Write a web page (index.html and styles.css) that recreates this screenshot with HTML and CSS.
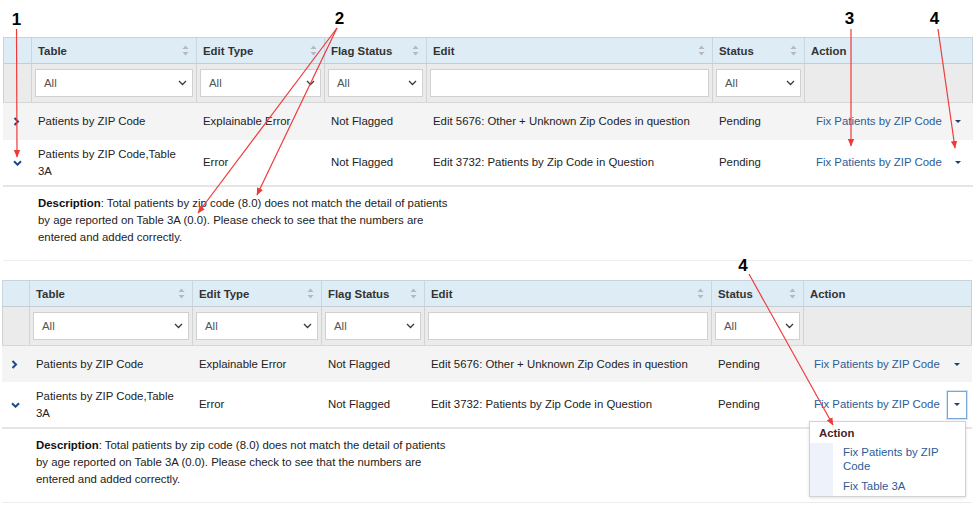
FILE: index.html
```html
<!DOCTYPE html>
<html>
<head>
<meta charset="utf-8">
<title>Edits</title>
<link rel="stylesheet" href="styles.css">
</head>
<body>
<div class="page">
  <section class="grid t1">
    <div class="row head">
      <div class="hc"></div>
      <div class="hc"><span>Table</span><svg class="sort" viewBox="0 0 7 11"><path d="M3.5 0.5L6.5 4H0.5Z M3.5 10.5L0.5 7H6.5Z"/></svg></div>
      <div class="hc"><span>Edit Type</span><svg class="sort" viewBox="0 0 7 11"><path d="M3.5 0.5L6.5 4H0.5Z M3.5 10.5L0.5 7H6.5Z"/></svg></div>
      <div class="hc"><span>Flag Status</span><svg class="sort" viewBox="0 0 7 11"><path d="M3.5 0.5L6.5 4H0.5Z M3.5 10.5L0.5 7H6.5Z"/></svg></div>
      <div class="hc"><span>Edit</span><svg class="sort" viewBox="0 0 7 11"><path d="M3.5 0.5L6.5 4H0.5Z M3.5 10.5L0.5 7H6.5Z"/></svg></div>
      <div class="hc"><span>Status</span><svg class="sort" viewBox="0 0 7 11"><path d="M3.5 0.5L6.5 4H0.5Z M3.5 10.5L0.5 7H6.5Z"/></svg></div>
      <div class="hc"><span>Action</span></div>
    </div>
    <div class="row filt">
      <div class="fc"></div>
      <div class="fc"><div class="sel"><span>All</span><svg class="chev" viewBox="0 0 9 6"><path d="M1 1l3.5 3.5L8 1"/></svg></div></div>
      <div class="fc"><div class="sel"><span>All</span><svg class="chev" viewBox="0 0 9 6"><path d="M1 1l3.5 3.5L8 1"/></svg></div></div>
      <div class="fc"><div class="sel"><span>All</span><svg class="chev" viewBox="0 0 9 6"><path d="M1 1l3.5 3.5L8 1"/></svg></div></div>
      <div class="fc"><div class="inp"></div></div>
      <div class="fc"><div class="sel"><span>All</span><svg class="chev" viewBox="0 0 9 6"><path d="M1 1l3.5 3.5L8 1"/></svg></div></div>
      <div class="fc"></div>
    </div>
    <div class="row data odd">
      <div class="dc exp"><svg class="xr" viewBox="0 0 7 9"><path d="M1.5 1l3.5 3.5L1.5 8"/></svg></div>
      <div class="dc">Patients by ZIP Code</div>
      <div class="dc">Explainable Error</div>
      <div class="dc">Not Flagged</div>
      <div class="dc">Edit 5676: Other + Unknown Zip Codes in question</div>
      <div class="dc">Pending</div>
      <div class="dc act"><a href="#">Fix Patients by ZIP Code</a><span class="cbtn"><i></i></span></div>
    </div>
    <div class="row data open">
      <div class="dc exp"><svg class="xd" viewBox="0 0 9 6"><path d="M1 1.2l3.5 3.5L8 1.2"/></svg></div>
      <div class="dc">Patients by ZIP Code,Table 3A</div>
      <div class="dc">Error</div>
      <div class="dc">Not Flagged</div>
      <div class="dc">Edit 3732: Patients by Zip Code in Question</div>
      <div class="dc">Pending</div>
      <div class="dc act"><a href="#">Fix Patients by ZIP Code</a><span class="cbtn"><i></i></span></div>
    </div>
    <div class="desc"><p><b>Description</b>: Total patients by zip code (8.0) does not match the detail of patients by age reported on Table 3A (0.0). Please check to see that the numbers are entered and added correctly.</p></div>
  </section>

  <section class="grid t2">
    <div class="row head">
      <div class="hc"></div>
      <div class="hc"><span>Table</span><svg class="sort" viewBox="0 0 7 11"><path d="M3.5 0.5L6.5 4H0.5Z M3.5 10.5L0.5 7H6.5Z"/></svg></div>
      <div class="hc"><span>Edit Type</span><svg class="sort" viewBox="0 0 7 11"><path d="M3.5 0.5L6.5 4H0.5Z M3.5 10.5L0.5 7H6.5Z"/></svg></div>
      <div class="hc"><span>Flag Status</span><svg class="sort" viewBox="0 0 7 11"><path d="M3.5 0.5L6.5 4H0.5Z M3.5 10.5L0.5 7H6.5Z"/></svg></div>
      <div class="hc"><span>Edit</span><svg class="sort" viewBox="0 0 7 11"><path d="M3.5 0.5L6.5 4H0.5Z M3.5 10.5L0.5 7H6.5Z"/></svg></div>
      <div class="hc"><span>Status</span><svg class="sort" viewBox="0 0 7 11"><path d="M3.5 0.5L6.5 4H0.5Z M3.5 10.5L0.5 7H6.5Z"/></svg></div>
      <div class="hc"><span>Action</span></div>
    </div>
    <div class="row filt">
      <div class="fc"></div>
      <div class="fc"><div class="sel"><span>All</span><svg class="chev" viewBox="0 0 9 6"><path d="M1 1l3.5 3.5L8 1"/></svg></div></div>
      <div class="fc"><div class="sel"><span>All</span><svg class="chev" viewBox="0 0 9 6"><path d="M1 1l3.5 3.5L8 1"/></svg></div></div>
      <div class="fc"><div class="sel"><span>All</span><svg class="chev" viewBox="0 0 9 6"><path d="M1 1l3.5 3.5L8 1"/></svg></div></div>
      <div class="fc"><div class="inp"></div></div>
      <div class="fc"><div class="sel"><span>All</span><svg class="chev" viewBox="0 0 9 6"><path d="M1 1l3.5 3.5L8 1"/></svg></div></div>
      <div class="fc"></div>
    </div>
    <div class="row data odd">
      <div class="dc exp"><svg class="xr" viewBox="0 0 7 9"><path d="M1.5 1l3.5 3.5L1.5 8"/></svg></div>
      <div class="dc">Patients by ZIP Code</div>
      <div class="dc">Explainable Error</div>
      <div class="dc">Not Flagged</div>
      <div class="dc">Edit 5676: Other + Unknown Zip Codes in question</div>
      <div class="dc">Pending</div>
      <div class="dc act"><a href="#">Fix Patients by ZIP Code</a><span class="cbtn"><i></i></span></div>
    </div>
    <div class="row data open">
      <div class="dc exp"><svg class="xd" viewBox="0 0 9 6"><path d="M1 1.2l3.5 3.5L8 1.2"/></svg></div>
      <div class="dc">Patients by ZIP Code,Table 3A</div>
      <div class="dc">Error</div>
      <div class="dc">Not Flagged</div>
      <div class="dc">Edit 3732: Patients by Zip Code in Question</div>
      <div class="dc">Pending</div>
      <div class="dc act"><a href="#">Fix Patients by ZIP Code</a><span class="cbtn focus"><i></i></span>
        <div class="menu">
          <h4>Action</h4>
          <ul>
            <li>Fix Patients by ZIP Code</li>
            <li>Fix Table 3A</li>
          </ul>
        </div>
      </div>
    </div>
    <div class="desc"><p><b>Description</b>: Total patients by zip code (8.0) does not match the detail of patients by age reported on Table 3A (0.0). Please check to see that the numbers are entered and added correctly.</p></div>
  </section>

  <svg class="notes" viewBox="0 0 975 517">
    <defs>
      <marker id="ah" markerWidth="8" markerHeight="8" refX="7" refY="4" orient="auto" markerUnits="userSpaceOnUse">
        <path d="M0 0.8L7.5 4L0 7.2Z" fill="#ee3a3a"/>
      </marker>
    </defs>
    <g class="ln">
      <line x1="16.5" y1="29" x2="17" y2="157"/>
      <line x1="337" y1="28" x2="198" y2="213"/>
      <line x1="337" y1="28" x2="257" y2="195"/>
      <line x1="851" y1="29" x2="851" y2="146"/>
      <line x1="938" y1="29" x2="955" y2="148"/>
      <line x1="749" y1="274" x2="833" y2="425"/>
    </g>
    <g class="num">
      <text x="16.5" y="24.5">1</text>
      <text x="339.5" y="24">2</text>
      <text x="849.5" y="24">3</text>
      <text x="934.5" y="24">4</text>
      <text x="743" y="271">4</text>
    </g>
  </svg>
</div>
</body>
</html>
```

FILE: styles.css
```css
* { box-sizing: border-box; margin: 0; padding: 0; }
html, body { width: 975px; height: 517px; overflow: hidden; background: #fff; }
body {
  font-family: "Liberation Sans", Arial, sans-serif;
  font-size: 11.4px;
  color: #222;
}
.page { position: relative; width: 975px; height: 517px; padding-top: 37px; }

.grid {
  --c: 29px 165px 128px 102px 286px 92px 168px;
  --first: 29px;
  width: 970px;
  margin-left: 3px;
}
.t2 {
  --c: 28px 163px 129px 103px 287px 92px 168px;
  --first: 28px;
  margin-left: 2px;
  margin-top: 19px;
}
.row { display: grid; grid-template-columns: var(--c); }

/* header */
.head {
  height: 27px;
  background: #deecf5;
  border-top: 1px solid #c6d5dd;
  border-bottom: 1px solid #c3ced3;
  box-shadow: inset 1px 0 #c6d5dd, inset -1px 0 #c6d5dd;
}
.hc {
  display: flex;
  align-items: center;
  justify-content: space-between;
  padding: 0 7px 0 6px;
  border-right: 1px solid #c8d7df;
  font-weight: bold;
  color: #333;
}
.hc:last-child { border-right: 0; }
.sort { width: 7px; height: 11px; fill: #b6b9bb; flex: none; }

/* filters */
.filt {
  height: 39px;
  background: #ebebeb;
  border-bottom: 1px solid #d7d7d7;
  box-shadow: inset 1px 0 #d0d0d0, inset -1px 0 #d0d0d0;
}
.fc { padding: 5px 3px 0 3px; border-right: 1px solid #d3d3d3; }
.fc:last-child { border-right: 0; }
.sel, .inp {
  height: 28px;
  background: #fff;
  border: 1px solid #d0d0d0;
}
.sel {
  display: flex;
  align-items: center;
  justify-content: space-between;
  padding: 0 5px 0 8px;
  color: #555;
}
.chev { width: 9px; height: 6px; fill: none; stroke: #3a3a3a; stroke-width: 1.3; }

/* data rows */
.data { background: #fff; }
.odd { height: 37px; background: #f4f4f4; }
.t2 .odd { height: 36px; }
.open { height: 47px; border-bottom: 2px solid #e5e5e5; }
.dc {
  display: flex;
  align-items: center;
  padding: 0 10px 0 6px;
  line-height: 17px;
}
.exp { padding-left: 10px; }
.xr { width: 7px; height: 9px; fill: none; stroke: #1c4a87; stroke-width: 2; }
.xd { width: 9px; height: 6px; fill: none; stroke: #1c4a87; stroke-width: 2; }
.t2 .exp { padding-left: 9px; }

.act {
  position: relative;
  justify-content: space-between;
  padding: 0 5px 0 11px;
}
.t2 .act { padding-left: 10px; }
.act a { color: #2c5c98; text-decoration: none; }
.cbtn {
  width: 20px;
  height: 28px;
  display: flex;
  align-items: center;
  justify-content: center;
  border: 1px solid transparent;
}
.cbtn i {
  display: block;
  width: 0;
  height: 0;
  border-left: 3px solid transparent;
  border-right: 3px solid transparent;
  border-top: 3px solid #1f3f6f;
}
.cbtn.focus { border-color: #79a6dc; box-shadow: 0 0 0 1px #d3e3f6; }

/* dropdown */
.menu {
  position: absolute;
  left: 5px;
  top: 39px;
  width: 157px;
  background: #fff;
  border: 1px solid #d2d2d2;
  box-shadow: 0 1px 3px rgba(0, 0, 0, 0.12);
  z-index: 2;
}
.menu h4 {
  font-size: 11.4px;
  line-height: 14px;
  font-weight: bold;
  color: #4a1f1f;
  padding: 4px 0 3px 9px;
}
.menu ul {
  list-style: none;
  border-left: 23px solid #eef2fa;
  padding: 2px 0 3px;
}
.menu li {
  line-height: 14px;
  padding: 0 12px 0 10px;
  color: #2c5c98;
}
.menu li + li { margin-top: 6px; }

/* description */
.desc {
  padding: 8px 0 14px calc(var(--first) + 6px);
  line-height: 17px;
  border-bottom: 1px solid #ededed;
}
.desc p { width: 418px; }
.desc b { color: #111; }

/* annotations */
.notes {
  position: absolute;
  left: 0;
  top: 0;
  width: 975px;
  height: 517px;
  pointer-events: none;
  z-index: 5;
}
.ln line { stroke: #ee3a3a; stroke-width: 1.2; marker-end: url(#ah); }
.num text {
  font-family: "Liberation Sans", Arial, sans-serif;
  font-weight: bold;
  font-size: 17px;
  fill: #000;
  text-anchor: middle;
}
```
